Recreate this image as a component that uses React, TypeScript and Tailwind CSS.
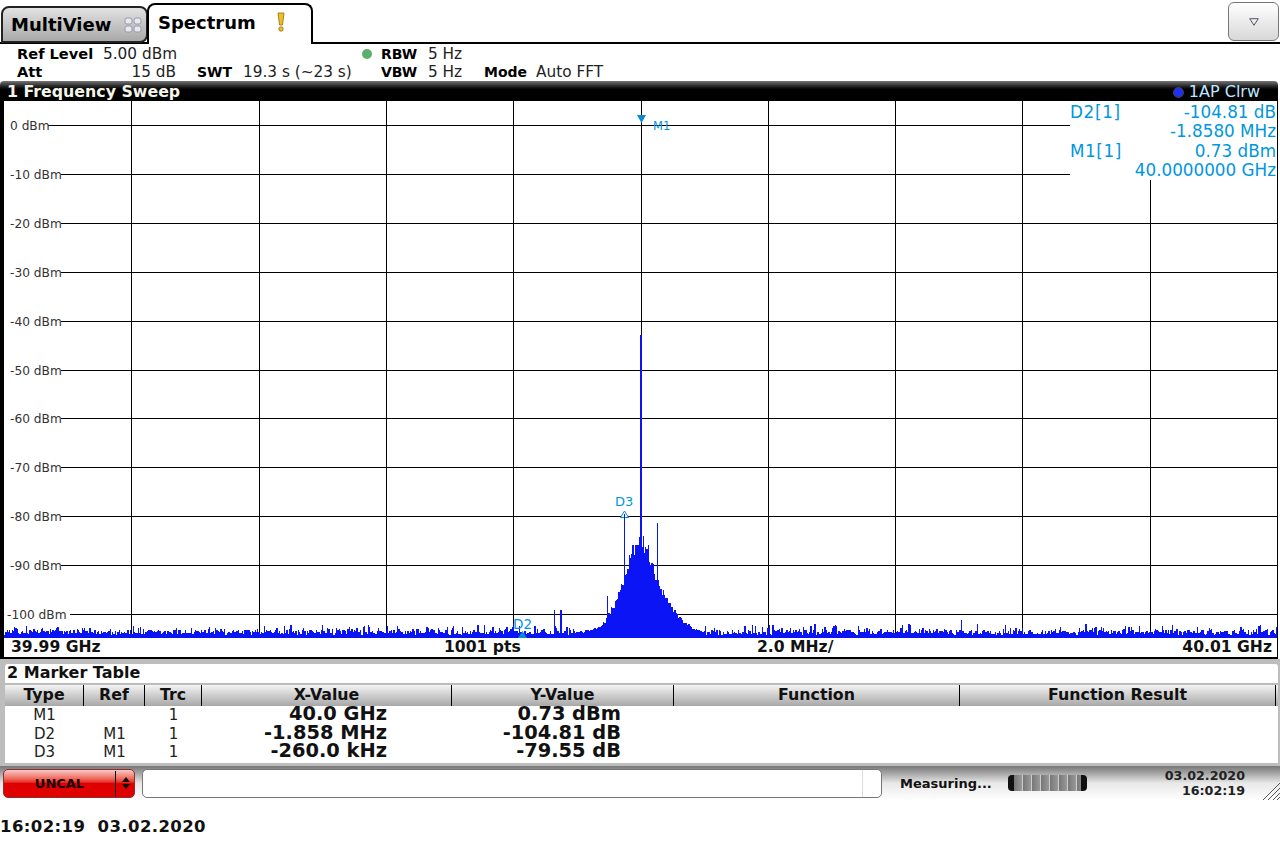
import React from "react";

const HY = [125, 174, 223, 272, 321, 370, 418, 467, 516, 565, 614];
const VX = [131, 259, 386, 513, 641, 768, 895, 1022, 1150];
const ENV: [number, number][] = [[585, 7], [597, 11], [604, 17], [613, 34], [624, 62], [630, 86], [637, 102], [641, 100], [647, 92], [657, 60], [667, 38], [677, 24], [685, 16], [693, 10], [705, 5]];
function env(x: number) {
  if (x <= ENV[0][0] || x >= ENV[ENV.length - 1][0]) return 0;
  for (let i = 1; i < ENV.length; i++) {
    if (x <= ENV[i][0]) {
      const [a, b] = ENV[i - 1];
      const [c, d] = ENV[i];
      return b + ((x - a) / (c - a)) * (d - b);
    }
  }
  return 0;
}
function trace() {
  let s = 12345;
  const r = () => {
    s = (s * 1664525 + 1013904223) >>> 0;
    return s / 4294967296;
  };
  let d = "M4 638";
  for (let i = 0; i < 1001; i++) {
    const x = 4 + i * 1.272;
    const e = env(x);
    let h = 3 + 5 * r() + Math.pow(r(), 5) * 7;
    if (e > 0) h = Math.max(h, e * (0.88 + 0.18 * r()) - r() * 1.5);
    if (Math.abs(x - 553) < 0.64 || Math.abs(x - 560.5) < 0.64) h = 28;
    if (Math.abs(x - 607) < 0.64) h = 42;
    if (Math.abs(x - 961) < 0.64) h = 18;
    const top = (638 - h).toFixed(1);
    d += `V${top}H${(x + 1.272).toFixed(1)}`;
  }
  return d + "V638Z";
}
const TRACE = trace();
const LABELS = ["0 dBm", "-10 dBm", "-20 dBm", "-30 dBm", "-40 dBm", "-50 dBm", "-60 dBm", "-70 dBm", "-80 dBm", "-90 dBm", "-100 dBm"];
const ROWS = [
  ["M1", "", "1", "40.0 GHz", "0.73 dBm"],
  ["D2", "M1", "1", "-1.858 MHz", "-104.81 dB"],
  ["D3", "M1", "1", "-260.0 kHz", "-79.55 dB"],
];
const COLS = "grid grid-cols-[79px_61px_57px_250px_222px_286px_316px]";
const HEAD = ["Type", "Ref", "Trc", "X-Value", "Y-Value", "Function", "Function Result"];
const LINE_START = [48, 61, 61, 61, 61, 61, 61, 61, 61, 61, 70];

function Plot() {
  return (
    <svg viewBox="4 101 1273 537" className="block w-[1273px] h-[537px] bg-white">
      {HY.map((y, i) => (
        <line key={y} x1={LINE_START[i]} x2={i < 2 ? 1070 : 1277} y1={y + 0.5} y2={y + 0.5} stroke="#000" />
      ))}
      {VX.map((x) => (
        <line key={x} x1={x + 0.5} x2={x + 0.5} y1={x === 1150 ? 180 : 101} y2={638} stroke="#000" />
      ))}
      {LABELS.map((t, i) => (
        <text key={t} x={i === 10 ? 7 : 10} y={HY[i] + 5} fontSize="12.2" fill="#333">{t}</text>
      ))}
      <path d={TRACE} fill="#0a14f5" shapeRendering="crispEdges" />
      <rect x="640" y="335" width="2" height="303" fill="#0a14f5" />
      <rect x="624" y="513" width="1" height="125" fill="#0a14f5" />
      <rect x="657" y="523" width="1" height="115" fill="#0a14f5" />
      <path d="M637 115H646L641.5 123Z" fill="#0a8ad0" />
      <text x="653" y="130" fontSize="11.5" fill="#0096e6">M1</text>
      <path d="M624.5 511L620.5 517.5H628.5Z" fill="#fff" stroke="#0a8ad0" />
      <rect x="624" y="514" width="1" height="4" fill="#0a14f5" />
      <text x="615" y="506" fontSize="13" fill="#0096e6">D3</text>
      <path d="M522.5 631L518 638H527Z" fill="#0a8ad0" />
      <text x="513" y="629" fontSize="13.5" fill="#0096e6">D2</text>
    </svg>
  );
}

export default function App() {
  return (
    <div className="w-[1280px] h-[850px] bg-white text-black flex flex-col overflow-hidden font-['DejaVu_Sans',sans-serif]">
      {/* tabs */}
      <div className="h-[44px] flex items-end border-b-2 border-black relative shrink-0">
        <div className="ml-px w-[147px] h-[37px] rounded-t-[8px] rounded-br-[8px] border-2 border-[#222] bg-linear-to-b from-[#e2e2e2] to-[#a9a9a9] flex items-center pl-[8px] pt-[1px] -mb-[1px]">
          <span className="text-[18px] font-bold leading-none">MultiView</span>
          <svg viewBox="0 0 18 16" className="w-[18px] h-[16px] ml-[13px]" fill="#e8e8ee" stroke="#9a9aa8">
            <rect x="1" y="1" width="7" height="6" rx="2" />
            <rect x="10" y="1" width="7" height="6" rx="2" />
            <rect x="1" y="9" width="7" height="6" rx="2" />
            <rect x="10" y="9" width="7" height="6" rx="2" />
          </svg>
        </div>
        <div className="w-[166px] h-[41px] bg-white rounded-t-[8px] border-2 border-b-0 border-black flex items-start pl-[9px] pt-[8px] -mb-[2px] -ml-[1px] relative z-10">
          <span className="text-[18px] font-bold leading-[20px]">Spectrum</span>
          <svg viewBox="0 0 10 20" className="w-[10px] h-[20px] ml-[20px] -mt-px">
            <path d="M2 1H8L6.5 13H3.5Z" fill="#f0c020" stroke="#8a7010" strokeWidth="0.8" />
            <circle cx="5" cy="17" r="2.2" fill="#f0c020" stroke="#8a7010" strokeWidth="0.8" />
          </svg>
        </div>
        <button className="absolute right-[1px] top-[2px] w-[51px] h-[39px] rounded-[6px] border border-[#777] bg-linear-to-b from-white to-[#d8d8d8] flex items-center justify-center">
          <svg viewBox="0 0 10 8" className="w-[10px] h-[8px]"><path d="M.7.7H9.3L5 7.3Z" fill="none" stroke="#556" /></svg>
        </button>
      </div>

      {/* settings */}
      <div className="h-[37px] pl-[17px] shrink-0 grid grid-cols-[86px_73px_67px_138px_47px_56px_52px_auto] grid-rows-[19px_18px] text-[15.3px] leading-[18px] items-center text-[#222] whitespace-nowrap">
        <b className="text-[14.6px] text-black">Ref Level</b><span>5.00 dBm</span><span /><span className="flex justify-end pr-[9px]"><i className="w-[10px] h-[10px] rounded-full bg-[#5cae6c] block" /></span><b className="text-[14px] text-black">RBW</b><span>5 Hz</span><span /><span />
        <b className="text-[14.6px] text-black">Att</b><span className="text-right">15 dB</span><b className="pl-[21px] text-[14px] text-black">SWT</b><span>19.3 s (~23 s)</span><b className="text-[14px] text-black">VBW</b><span>5 Hz</span><b className="text-[14px] text-black">Mode</b><span>Auto FFT</span>
      </div>

      {/* sweep panel */}
      <div className="h-[578px] shrink-0 flex flex-col">
        <div className="h-[20px] rounded-t-[4px] bg-linear-to-b from-[#777] via-black to-black flex items-center justify-between pl-[7px] pr-[18px] pt-[2px] text-[16px] leading-none text-white mr-[2px]">
          <b className="text-[15.8px] text-[#f4f4e8]">1 Frequency Sweep</b>
          <span className="flex items-center gap-[5px] text-[#bfe6ff]">
            <i className="w-[11px] h-[11px] rounded-full bg-[#2030f0] border border-[#444] block" />
            1AP Clrw
          </span>
        </div>
        <div className="border-l-4 border-black mr-[2px] border-r border-b-2 flex flex-col">
          <div className="relative">
            <Plot />
            <div className="absolute right-0 top-0 w-[207px] h-[79px] pt-[2px] text-[#0096e0] text-[16.8px] leading-[19.3px] pr-px">
              <div className="flex justify-between"><span className="tracking-[0.7px]">D2[1]</span><span>-104.81 dB</span></div>
              <div className="text-right">-1.8580 MHz</div>
              <div className="flex justify-between"><span className="tracking-[0.6px]">M1[1]</span><span>0.73 dBm</span></div>
              <div className="text-right">40.0000000 GHz</div>
            </div>
          </div>
          <div className="h-[19px] grid grid-cols-[433px_313px_1fr_auto] items-center pl-[7px] pr-[5px] pt-px text-[15.6px] font-bold leading-none bg-white text-[#111]">
            <span>39.99 GHz</span><span>1001 pts</span><span>2.0 MHz/</span><span>40.01 GHz</span>
          </div>
        </div>
      </div>

      {/* marker table */}
      <div className="h-[107px] shrink-0 bg-[#bdbdbd] pt-[5px] pl-[5px] pr-[2px] pb-[3px] flex flex-col">
        <div className="h-[19px] bg-white rounded-t-[3px] text-[16px] font-bold leading-[18px] pl-[2px] text-[#111] border-b border-[#bbb] box-content">2 Marker Table</div>
        <div className={`${COLS} h-[21px] bg-linear-to-b from-[#f4f4f4] to-[#a8a8a8] text-[15.8px] font-bold leading-[20px] text-center text-[#111] mt-px`}>
          {HEAD.map((h) => (
            <div key={h} className="border-r border-black">{h}</div>
          ))}
        </div>
        <div className="bg-white flex-1">
          {ROWS.map((r) => (
            <div key={r[0]} className={`${COLS} h-[18.6px] text-[15px] leading-[18.6px] text-center text-[#222]`}>
              <span>{r[0]}</span>
              <span>{r[1]}</span>
              <span>{r[2]}</span>
              <b className="text-right pr-[65px] text-[19.4px] leading-[15px] text-[#111]">{r[3]}</b>
              <b className="text-right pr-[53px] text-[19.4px] leading-[15px] text-[#111]">{r[4]}</b>
              <span /><span />
            </div>
          ))}
        </div>
      </div>

      {/* status bar */}
      <div className="h-[34px] shrink-0 bg-linear-to-b from-[#777] via-[#e8e8e8] to-white flex items-center relative">
        <div className="ml-[3px] w-[132px] h-[29px] rounded-[5px] border border-[#8a3030] bg-linear-to-b from-[#f6c8c8] via-[#e00000] to-[#e00000] flex items-center">
          <b className="w-[111px] text-center text-[13px] leading-none text-[#1a0000]">UNCAL</b>
          <span className="w-px h-[25px] bg-black" />
          <svg viewBox="0 0 8 12" className="w-[8px] h-[12px] ml-[6px]"><path d="M4 0L8 5H0ZM4 12L0 7H8Z" fill="#111" /></svg>
        </div>
        <div className="ml-[7px] w-[740px] h-[29px] rounded-[5px] border border-[#777] bg-white flex justify-end">
          <span className="w-px h-full bg-[#ddd] mr-[18px]" />
        </div>
        <b className="ml-[18px] w-[108px] text-[13px] leading-none text-[#111]">Measuring...</b>
        <div className="w-[79px] h-[16px] rounded-[4px] bg-[repeating-linear-gradient(90deg,#777_0,#999_8px,#ccc_8px,#ccc_9px)] border-x-[6px] border-[#111]" />
        <div className="w-[158px] text-right text-[12.7px] font-bold leading-[15px] text-[#222]">03.02.2020<br />16:02:19</div>
        <svg viewBox="0 0 17 17" className="absolute right-0 bottom-0 w-[17px] h-[17px]" stroke="#555">
          <path d="M0 17L17 0M5 17L17 5M10 17L17 10M14 17L17 14" />
        </svg>
      </div>

      <div className="h-[51px] pt-[18px] text-[16.5px] font-bold leading-[18px] tracking-[0.4px] text-[#111] whitespace-pre">16:02:19  03.02.2020</div>
    </div>
  );
}
